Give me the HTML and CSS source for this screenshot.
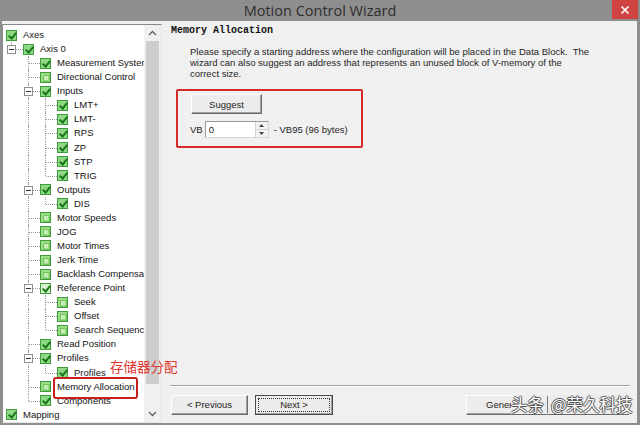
FILE: index.html
```html
<!DOCTYPE html>
<html>
<head>
<meta charset="utf-8">
<link rel="stylesheet" href="styles.css">
</head>
<body>
<div class="window">
  <div class="titlebar">
    <span></span>
    <span class="title">Motion Control Wizard</span>
    <span class="close-wrap"><span class="close"><svg width="10" height="10" viewBox="0 0 10 10"><path d="M1.5 1.5 L8.5 8.5 M8.5 1.5 L1.5 8.5" stroke="#fff" stroke-width="1.6"/></svg></span></span>
  </div>
  <div class="body">
    <div class="tree">
      <div class="tree-list">
        <div class="row"><span class="cb on"></span><span class="lbl">Axes</span></div>
        <div class="row"><span class="c l"><i class="exp"></i></span><span class="cb on"></span><span class="lbl">Axis 0</span></div>
        <div class="row"><span class="c"></span><span class="c t"></span><span class="cb on"></span><span class="lbl">Measurement System</span></div>
        <div class="row"><span class="c"></span><span class="c t"></span><span class="cb off"></span><span class="lbl">Directional Control</span></div>
        <div class="row"><span class="c"></span><span class="c t"><i class="exp"></i></span><span class="cb on"></span><span class="lbl">Inputs</span></div>
        <div class="row"><span class="c"></span><span class="c v"></span><span class="c t"></span><span class="cb on"></span><span class="lbl">LMT+</span></div>
        <div class="row"><span class="c"></span><span class="c v"></span><span class="c t"></span><span class="cb on"></span><span class="lbl">LMT-</span></div>
        <div class="row"><span class="c"></span><span class="c v"></span><span class="c t"></span><span class="cb on"></span><span class="lbl">RPS</span></div>
        <div class="row"><span class="c"></span><span class="c v"></span><span class="c t"></span><span class="cb on"></span><span class="lbl">ZP</span></div>
        <div class="row"><span class="c"></span><span class="c v"></span><span class="c t"></span><span class="cb on"></span><span class="lbl">STP</span></div>
        <div class="row"><span class="c"></span><span class="c v"></span><span class="c l"></span><span class="cb on"></span><span class="lbl">TRIG</span></div>
        <div class="row"><span class="c"></span><span class="c t"><i class="exp"></i></span><span class="cb on"></span><span class="lbl">Outputs</span></div>
        <div class="row"><span class="c"></span><span class="c v"></span><span class="c l"></span><span class="cb on"></span><span class="lbl">DIS</span></div>
        <div class="row"><span class="c"></span><span class="c t"></span><span class="cb off"></span><span class="lbl">Motor Speeds</span></div>
        <div class="row"><span class="c"></span><span class="c t"></span><span class="cb off"></span><span class="lbl">JOG</span></div>
        <div class="row"><span class="c"></span><span class="c t"></span><span class="cb off"></span><span class="lbl">Motor Times</span></div>
        <div class="row"><span class="c"></span><span class="c t"></span><span class="cb off"></span><span class="lbl">Jerk Time</span></div>
        <div class="row"><span class="c"></span><span class="c t"></span><span class="cb off"></span><span class="lbl">Backlash Compensation</span></div>
        <div class="row"><span class="c"></span><span class="c t"><i class="exp"></i></span><span class="cb on light"></span><span class="lbl">Reference Point</span></div>
        <div class="row"><span class="c"></span><span class="c v"></span><span class="c t"></span><span class="cb off"></span><span class="lbl">Seek</span></div>
        <div class="row"><span class="c"></span><span class="c v"></span><span class="c t"></span><span class="cb off"></span><span class="lbl">Offset</span></div>
        <div class="row"><span class="c"></span><span class="c v"></span><span class="c l"></span><span class="cb off"></span><span class="lbl">Search Sequence</span></div>
        <div class="row"><span class="c"></span><span class="c t"></span><span class="cb on"></span><span class="lbl">Read Position</span></div>
        <div class="row"><span class="c"></span><span class="c t"><i class="exp"></i></span><span class="cb on"></span><span class="lbl">Profiles</span></div>
        <div class="row"><span class="c"></span><span class="c v"></span><span class="c l"></span><span class="cb on"></span><span class="lbl">Profiles</span></div>
        <div class="row"><span class="c"></span><span class="c t"></span><span class="cb off"></span><span class="lbl">Memory Allocation</span></div>
        <div class="row"><span class="c"></span><span class="c l"></span><span class="cb on"></span><span class="lbl">Components</span></div>
        <div class="row"><span class="cb on"></span><span class="lbl">Mapping</span></div>
      </div>
      <div class="scrollbar">
        <div class="sb-btn"><svg width="9" height="6" viewBox="0 0 9 6"><path d="M1 5 L4.5 1.5 L8 5" fill="none" stroke="#606060" stroke-width="1.3"/></svg></div>
        <div class="sb-track"><div class="sb-thumb"></div></div>
        <div class="sb-btn"><svg width="9" height="6" viewBox="0 0 9 6"><path d="M1 1 L4.5 4.5 L8 1" fill="none" stroke="#606060" stroke-width="1.3"/></svg></div>
      </div>
    </div>
    <div class="page">
      <div class="page-head">Memory Allocation</div>
      <p class="desc">Please specify a starting address where the configuration will be placed in the Data Block.&nbsp; The<br>wizard can also suggest an address that represents an unused block of V-memory of the<br>correct size.</p>
      <div class="hl-box">
        <button class="btn suggest">Suggest</button>
        <div class="vb-row">
          <span>VB</span>
          <div class="spin-input">
            <span class="val">0</span>
            <div class="spin">
              <span class="spin-half"><svg width="5" height="3" viewBox="0 0 5 3"><path d="M0 3 L2.5 0 L5 3Z" fill="#444"/></svg></span>
              <span class="spin-half"><svg width="5" height="3" viewBox="0 0 5 3"><path d="M0 0 L2.5 3 L5 0Z" fill="#444"/></svg></span>
            </div>
          </div>
          <span>- VB95 (96 bytes)</span>
        </div>
      </div>
      <div class="spacer"></div>
      <div class="sep"></div>
      <div class="nav">
        <button class="btn nav-btn">&lt; Previous</button>
        <button class="btn nav-btn default"><span class="focus">Next &gt;</span></button>
        <span class="spacer"></span>
        <button class="btn gen">Generate</button>
      </div>
    </div>
  </div>
  <span class="annot-text">存储器分配</span>
  <span class="annot-box"></span>
  <span class="watermark">头条<span class="wm-bar"></span>@荣久科技</span>
</div>
</body>
</html>
```

FILE: styles.css
```css
* { box-sizing: border-box; }
html, body { margin: 0; padding: 0; }
body {
  width: 640px;
  height: 425px;
  overflow: hidden;
  font-family: "Liberation Sans", Arial, sans-serif;
}
.window {
  position: relative;
  width: 640px;
  height: 425px;
  background: #8e8e8e;
  display: flex;
  flex-direction: column;
}
.titlebar {
  height: 22px;
  display: grid;
  grid-template-columns: 1fr auto 1fr;
  align-items: start;
}
.title {
  font-family: "Open Sans", "Noto Sans", sans-serif;
  font-size: 14.5px;
  line-height: 21px;
  color: #2e2e2e;
}
.close-wrap { display: flex; justify-content: flex-end; padding-right: 2px; }
.close {
  width: 26px;
  height: 19px;
  background: #cf4343;
  display: flex;
  align-items: center;
  justify-content: center;
}
.body {
  flex: 1;
  margin: 0 3px 3px 2px;
  background: #f0f0f0;
  display: flex;
  padding-top: 3px;
  gap: 3px;
}
/* tree */
.tree {
  width: 160px;
  display: flex;
  border: 1px solid;
  border-color: #8a8a8a #e6e6e6 #e6e6e6 #8a8a8a;
  background: #fff;
}
.tree-list {
  flex: 1;
  overflow: hidden;
  padding: 3px 0 0 3px;
  font-size: 9.5px;
  color: #141414;
}
.row {
  height: 14.07px;
  display: flex;
  align-items: center;
  white-space: nowrap;
}
.c {
  position: relative;
  width: 17px;
  height: 14px;
  flex: none;
}
.c.v::before, .c.t::before, .c.l::before {
  content: "";
  position: absolute;
  left: 5px;
  top: 0;
  bottom: 0;
  border-left: 1px dotted #9a9a9a;
}
.c.l::before { bottom: 7px; }
.c.t::after, .c.l::after {
  content: "";
  position: absolute;
  left: 6px;
  right: 0;
  top: 7px;
  border-top: 1px dotted #9a9a9a;
}
.exp {
  position: absolute;
  left: 1px;
  top: 3px;
  width: 9px;
  height: 9px;
  border: 1px solid #8f8f8f;
  background: #fff;
  z-index: 1;
}
.exp::after {
  content: "";
  position: absolute;
  left: 1px;
  top: 3px;
  width: 5px;
  height: 1px;
  background: #333;
}
.cb {
  position: relative;
  flex: none;
  width: 11px;
  height: 11px;
  margin-right: 6px;
  border: 1px solid #3f9b3c;
}
.cb.on { background: #8fd884; }
.cb.on.light { background: #d8f3cf; }
.cb.on::after {
  content: "";
  position: absolute;
  left: 3px;
  top: 0px;
  width: 3px;
  height: 6px;
  border: solid #16771a;
  border-width: 0 2px 2px 0;
  transform: rotate(40deg);
}
.cb.off {
  background: #c5efb6;
  box-shadow: inset 0 0 0 2px #9bdc86;
}
.cb.off::after {
  content: "";
  position: absolute;
  left: 2px;
  top: 2px;
  width: 5px;
  height: 5px;
  border: 1px solid #74c45f;
}
.lbl { line-height: 14px; }
.scrollbar {
  width: 17px;
  flex: none;
  display: flex;
  flex-direction: column;
  background: #f0f0f0;
}
.sb-btn {
  height: 16px;
  display: flex;
  align-items: center;
  justify-content: center;
}
.sb-track {
  flex: 1;
  padding: 0 2px 22px 2px;
  display: flex;
}
.sb-thumb { flex: 1; background: #cdcdcd; }
/* page */
.page {
  flex: 1;
  display: flex;
  flex-direction: column;
  color: #1e1e1e;
  font-size: 9.5px;
}
.page-head {
  font-family: "Liberation Mono", "Courier New", monospace;
  font-weight: bold;
  font-size: 10px;
  line-height: 12px;
  margin-top: 1px;
  padding-left: 6px;
  color: #111;
}
.desc {
  margin: 9px 0 0 25px;
  line-height: 11px;
  white-space: nowrap;
}
.hl-box {
  align-self: flex-start;
  width: 187px;
  margin: 10px 0 0 11px;
  border: 2px solid #d52a2a;
  border-radius: 2px;
  padding: 3px 0 8px 12px;
  display: flex;
  flex-direction: column;
  align-items: flex-start;
}
.btn {
  font-family: "Liberation Sans", Arial, sans-serif;
  font-size: 9.5px;
  color: #1e1e1e;
  background: #ececec;
  border: 1px solid;
  border-color: #ffffff #6b6b6b #6b6b6b #ffffff;
  box-shadow: inset -1px -1px 0 #a0a0a0;
  padding: 0;
  height: 20px;
}
.suggest { width: 71px; margin-left: 1px; }
.vb-row {
  margin-top: 7px;
  display: flex;
  align-items: center;
  gap: 2px;
}
.spin-input {
  width: 64px;
  height: 17px;
  border: 1px solid;
  border-color: #9a9a9a #d8d8d8 #d8d8d8 #9a9a9a;
  background: #fff;
  display: flex;
  align-items: center;
  margin-right: 3px;
}
.val { flex: 1; padding-left: 3px; }
.spin {
  width: 13px;
  height: 15px;
  display: flex;
  flex-direction: column;
  border-left: 1px solid #d4d4d4;
}
.spin-half {
  flex: 1;
  display: flex;
  align-items: center;
  justify-content: center;
  background: #f2f2f2;
}
.spin-half + .spin-half { border-top: 1px solid #d0d0d0; }
.spacer { flex: 1; }
.sep {
  height: 2px;
  margin: 0 7px 0 5px;
  border-top: 1px solid #a0a0a0;
  border-bottom: 1px solid #ffffff;
}
.nav {
  display: flex;
  gap: 7px;
  padding: 8px 8px 8px 6px;
}
.nav-btn { width: 77px; }
.nav-btn.default {
  width: 78px;
  border: 1px solid #4a4a4a;
  padding: 2px;
}
.focus {
  display: flex;
  align-items: center;
  justify-content: center;
  height: 100%;
  border: 1px dotted #333;
}
.gen {
  width: 163px;
  text-align: left;
  padding-left: 19px;
}
/* overlays */
.annot-text {
  position: absolute;
  left: 110px;
  top: 358px;
  font-family: "Noto Sans CJK SC", sans-serif;
  font-size: 13.5px;
  line-height: 17px;
  color: #e0382f;
}
.annot-box {
  position: absolute;
  left: 53px;
  top: 377px;
  width: 85px;
  height: 22px;
  border: 2px solid #c8201f;
  border-radius: 3px;
}
.watermark {
  position: absolute;
  left: 511px;
  top: 395px;
  height: 19px;
  padding-right: 2px;
  display: flex;
  align-items: center;
  background: #ececec;
  font-family: "Noto Sans CJK SC", sans-serif;
  font-size: 16.5px;
  line-height: 19px;
  color: #ffffff;
  text-shadow: 1px 0 0 #555, -1px 0 0 #555, 0 1px 0 #555, 0 -1px 0 #555;
}
.wm-bar {
  width: 1px;
  height: 17px;
  background: #777;
  margin: 0 3px;
}
```
